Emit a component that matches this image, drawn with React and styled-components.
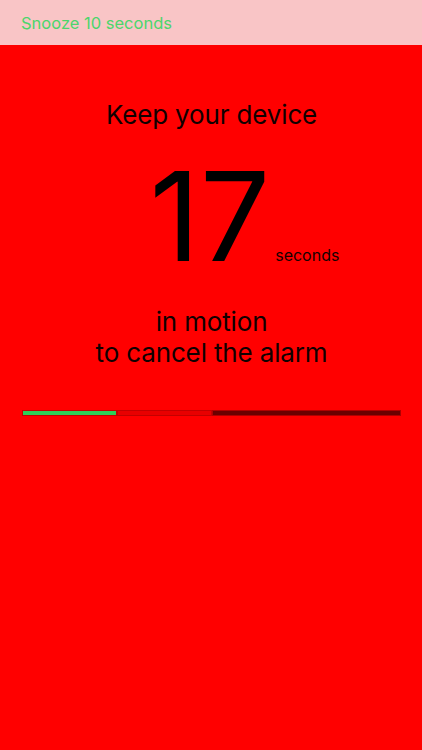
import React from 'react';
import styled, { createGlobalStyle } from 'styled-components';

const GlobalStyle = createGlobalStyle`
  html, body {
    margin: 0;
    padding: 0;
    background: #ff0000;
  }
  body {
    font-family: Inter, "Noto Sans", "Liberation Sans", sans-serif;
  }
`;

const Screen = styled.div`
  width: 422px;
  height: 750px;
  background: #ff0000;
  display: flex;
  flex-direction: column;
`;

const SnoozeBar = styled.div`
  height: 45px;
  background: #f9c5c6;
  display: flex;
  align-items: center;
  padding-left: 21px;
  box-sizing: border-box;
`;

const SnoozeButton = styled.span`
  color: #4cd56c;
  font-size: 16.5px;
  padding-top: 1px;
`;

const Content = styled.main`
  display: flex;
  flex-direction: column;
  align-items: center;
  padding: 54px 21px 0 22px;
`;

const Line = styled.div`
  color: #100000;
  font-size: 26px;
  line-height: 31px;
  letter-spacing: -0.15px;
  text-align: center;
`;

const CountRow = styled.div`
  display: flex;
  align-items: baseline;
  margin-top: 30px;
  margin-left: 66px;
  color: #000;
`;

const Count = styled.span`
  font-size: 124px;
  line-height: 112px;
  font-weight: 400;
  letter-spacing: 0;
`;

const Unit = styled.span`
  font-size: 16px;
  margin-left: 5px;
  color: #150000;
`;

const Message = styled.div`
  margin-top: 34px;
`;

const Progress = styled.div`
  display: flex;
  align-self: stretch;
  height: 6px;
  margin-top: 42px;
  box-sizing: border-box;
`;

const Segment = styled.div`
  flex: ${p => p.grow};
  background: ${p => p.color};
  border: 1px solid ${p => p.edge};
  box-sizing: border-box;
`;

export default function App() {
  const seconds = 17;
  return (
    <Screen>
      <GlobalStyle />
      <SnoozeBar>
        <SnoozeButton>Snooze 10 seconds</SnoozeButton>
      </SnoozeBar>
      <Content>
        <Line>Keep your device</Line>
        <CountRow>
          <Count>{seconds}</Count>
          <Unit>seconds</Unit>
        </CountRow>
        <Message>
          <Line>in motion</Line>
          <Line>to cancel the alarm</Line>
        </Message>
        <Progress>
          <Segment grow={94} color="#2ed158" edge="#c40000" />
          <Segment grow={95} color="#e80000" edge="#c40000" />
          <Segment grow={190} color="#6b0000" edge="#b00000" />
        </Progress>
      </Content>
    </Screen>
  );
}
